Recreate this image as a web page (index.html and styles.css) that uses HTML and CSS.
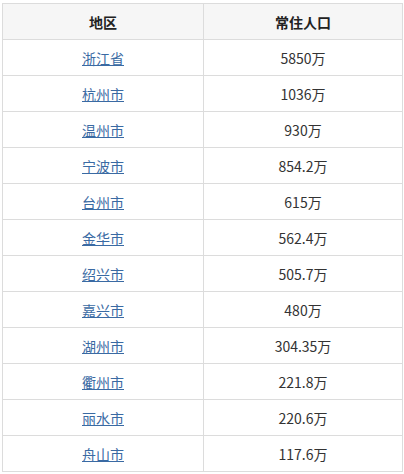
FILE: index.html
```html
<!DOCTYPE html>
<html lang="zh">
<head>
<meta charset="utf-8">
<link rel="stylesheet" href="styles.css">
</head>
<body>
<div class="wrap">
<table class="pop">
<thead>
<tr><th>地区</th><th>常住人口</th></tr>
</thead>
<tbody>
<tr><td><a href="#">浙江省</a></td><td>5850万</td></tr>
<tr><td><a href="#">杭州市</a></td><td>1036万</td></tr>
<tr><td><a href="#">温州市</a></td><td>930万</td></tr>
<tr><td><a href="#">宁波市</a></td><td>854.2万</td></tr>
<tr><td><a href="#">台州市</a></td><td>615万</td></tr>
<tr><td><a href="#">金华市</a></td><td>562.4万</td></tr>
<tr><td><a href="#">绍兴市</a></td><td>505.7万</td></tr>
<tr><td><a href="#">嘉兴市</a></td><td>480万</td></tr>
<tr><td><a href="#">湖州市</a></td><td>304.35万</td></tr>
<tr><td><a href="#">衢州市</a></td><td>221.8万</td></tr>
<tr><td><a href="#">丽水市</a></td><td>220.6万</td></tr>
<tr><td><a href="#">舟山市</a></td><td>117.6万</td></tr>
</tbody>
</table>
</div>
</body>
</html>
```
FILE: styles.css
```css
html, body {
  margin: 0;
  padding: 0;
  background: #fff;
}
.wrap {
  padding: 3px 0 0 2px;
}
.pop {
  border-collapse: collapse;
  width: 401px;
  table-layout: fixed;
  font-family: "Noto Sans CJK SC", "Microsoft YaHei", sans-serif;
  font-size: 14px;
  color: #333;
}
.pop th, .pop td {
  border: 1px solid #dcdcdc;
  height: 35px;
  padding: 0;
  text-align: center;
  vertical-align: middle;
  line-height: 20px;
}
.pop th:first-child, .pop td:first-child {
  width: 200px;
}
.pop th {
  background: #f6f6f6;
  font-weight: bold;
  color: #222;
}
.pop a {
  color: #3a6aa3;
  text-decoration: underline;
}
```
